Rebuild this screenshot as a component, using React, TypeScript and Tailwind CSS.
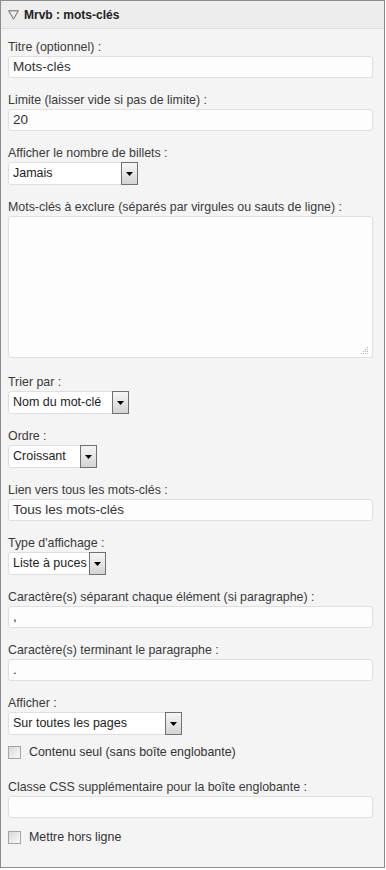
import React from 'react';

// --- small form primitives styled after the old WP admin widget form ---

const Label: React.FC<{ children: React.ReactNode }> = ({ children }) => (
  <div className="text-[12.4px] leading-[16px] text-[#3a3a3a] whitespace-nowrap">{children}</div>
);

const TextInput: React.FC<{ value?: string }> = ({ value = '' }) => (
  <div className="mt-[1px] h-[22px] w-[365px] rounded-[3px] border border-[#dfdfdf] bg-[#fdfdfd] pl-[4px] text-[13.5px] leading-[20px] text-[#333]">
    {value}
  </div>
);

const SelectBox: React.FC<{ value: string; width: string }> = ({ value, width }) => (
  <div className={`mt-[1px] flex h-[23px] ${width} rounded-[3px] border border-[#dfdfdf] bg-white`}>
    <span className="flex-1 pl-[4px] text-[12.5px] leading-[21px] text-[#222] whitespace-nowrap overflow-hidden">{value}</span>
    <div className="-my-[1px] -mr-[1px] flex w-[17px] shrink-0 items-center justify-center border border-[#707070] bg-gradient-to-b from-[#f6f6f6] to-[#d4d4d4]">
      <svg width="7" height="4" viewBox="0 0 7 4">
        <path d="M0 0h7L3.5 4z" fill="#000" />
      </svg>
    </div>
  </div>
);

const Checkbox: React.FC<{ label: string }> = ({ label }) => (
  <div className="flex h-[16px] items-center gap-[8px]">
    <span className="h-[13px] w-[13px] border border-[#a5a5a5] bg-gradient-to-br from-[#d8d8d8] to-[#fafafa]" />
    <span className="text-[12.4px] leading-[16px] text-[#333]">{label}</span>
  </div>
);

export default function App() {
  return (
    <div className="h-[868px] w-[385px] border border-[#8c8c8c] bg-[#f4f4f4] font-['Liberation_Sans',Arial,sans-serif]">
      {/* header */}
      <div className="flex h-[28px] items-center gap-[5px] border-b border-[#dcdcdc] bg-[#ededed] pl-[7px]">
        <svg width="11" height="10" viewBox="0 0 11 10">
          <path d="M0.7 0.8h9.6L5.5 9.2z" fill="none" stroke="#666" strokeWidth="1" />
        </svg>
        <span className="text-[12px] font-bold text-[#222]">Mrvb : mots-clés</span>
      </div>

      {/* form body */}
      <div className="px-[7px] pt-[10px]">
        <div className="mb-[14px]">
          <Label>Titre (optionnel) :</Label>
          <TextInput value="Mots-clés" />
        </div>
        <div className="mb-[14px]">
          <Label>Limite (laisser vide si pas de limite) :</Label>
          <TextInput value="20" />
        </div>
        <div className="mb-[14px]">
          <Label>Afficher le nombre de billets :</Label>
          <SelectBox value="Jamais" width="w-[130px]" />
        </div>
        <div className="mb-[16px]">
          <Label>Mots-clés à exclure (séparés par virgules ou sauts de ligne) :</Label>
          <div className="relative mt-[1px] h-[142px] w-[365px] rounded-[3px] border border-[#dfdfdf] bg-[#fdfdfd]">
            <svg className="absolute bottom-[2px] right-[3px]" width="8" height="8" viewBox="0 0 8 8">
              <g fill="#b5b5b5">
                <rect x="6" y="0" width="1" height="1" />
                <rect x="4" y="2" width="1" height="1" />
                <rect x="6" y="2" width="1" height="1" />
                <rect x="2" y="4" width="1" height="1" />
                <rect x="4" y="4" width="1" height="1" />
                <rect x="6" y="4" width="1" height="1" />
                <rect x="0" y="6" width="1" height="1" />
                <rect x="2" y="6" width="1" height="1" />
                <rect x="4" y="6" width="1" height="1" />
                <rect x="6" y="6" width="1" height="1" />
              </g>
            </svg>
          </div>
        </div>
        <div className="mb-[14px]">
          <Label>Trier par :</Label>
          <SelectBox value="Nom du mot-clé" width="w-[121px]" />
        </div>
        <div className="mb-[14px]">
          <Label>Ordre :</Label>
          <SelectBox value="Croissant" width="w-[89px]" />
        </div>
        <div className="mb-[14px]">
          <Label>Lien vers tous les mots-clés :</Label>
          <TextInput value="Tous les mots-clés" />
        </div>
        <div className="mb-[14px]">
          <Label>Type d'affichage :</Label>
          <SelectBox value="Liste à puces" width="w-[98px]" />
        </div>
        <div className="mb-[14px]">
          <Label>Caractère(s) séparant chaque élément (si paragraphe) :</Label>
          <TextInput value="," />
        </div>
        <div className="mb-[14px]">
          <Label>Caractère(s) terminant le paragraphe :</Label>
          <TextInput value="." />
        </div>
        <div className="mb-[9px]">
          <Label>Afficher :</Label>
          <SelectBox value="Sur toutes les pages" width="w-[174px]" />
        </div>
        <div className="mb-[19px]">
          <Checkbox label="Contenu seul (sans boîte englobante)" />
        </div>
        <div className="mb-[11px]">
          <Label>Classe CSS supplémentaire pour la boîte englobante :</Label>
          <TextInput />
        </div>
        <Checkbox label="Mettre hors ligne" />
      </div>
    </div>
  );
}
